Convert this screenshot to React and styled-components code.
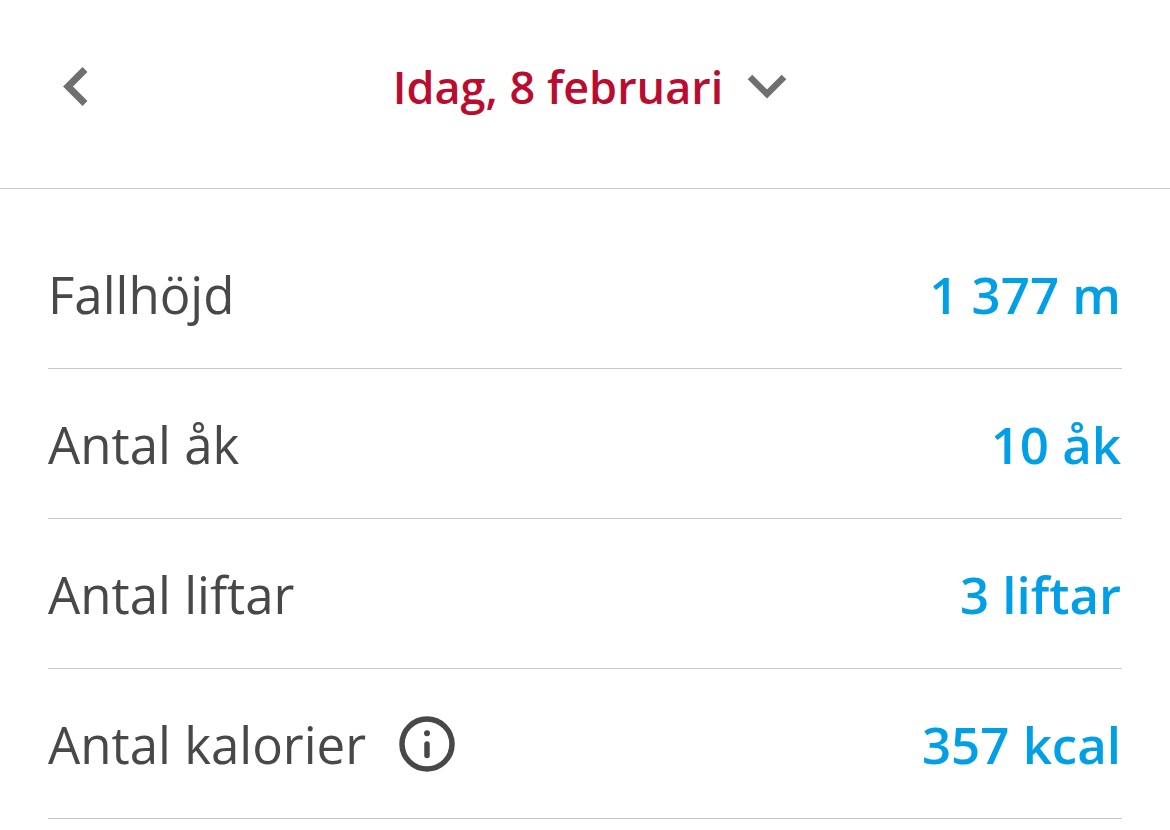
import React from "react";
import styled, { createGlobalStyle } from "styled-components";

const GlobalStyle = createGlobalStyle`
  * { box-sizing: border-box; }
  body {
    margin: 0;
    background: #fff;
    font-family: "Open Sans", "Noto Sans", sans-serif;
  }
`;

const Header = styled.header`
  display: grid;
  grid-template-columns: 64px 1fr 54px;
  align-items: center;
  height: 189px;
  padding: 0 44px 14px;
  border-bottom: 1px solid #c8c8c8;
`;

const IconButton = styled.button`
  display: flex;
  align-items: center;
  justify-content: center;
  padding: 0;
  border: 0;
  background: none;
  color: ${(p) => p.$color || "#6f6f6f"};
  cursor: pointer;
`;

const DateButton = styled(IconButton)`
  gap: 24px;
  justify-self: center;
  font: 600 45px/60px "Open Sans", "Noto Sans", sans-serif;
`;

const Stats = styled.dl`
  margin: 0;
  padding: 30px 48px 0;
`;

const Row = styled.div`
  display: flex;
  align-items: center;
  justify-content: space-between;
  height: 150px;
  border-bottom: 1px solid #c8c8c8;
  font-size: 51px;
  line-height: 68px;
`;

const Label = styled.dt`
  display: flex;
  align-items: center;
  gap: 32px;
  color: #484848;
`;

const Value = styled.dd`
  margin: 0;
  padding-right: 1px;
  color: #009fe6;
  font-weight: 600;
`;

const stats = [
  { label: "Fallhöjd", value: "1 377 m" },
  { label: "Antal åk", value: "10 åk" },
  { label: "Antal liftar", value: "3 liftar" },
  { label: "Antal kalorier", value: "357 kcal", info: true },
];

const BackIcon = () => (
  <svg width="26" height="40" viewBox="0 0 26 40" fill="none" stroke="currentColor" strokeWidth="7" aria-hidden="true">
    <path d="M22 2.5 5 19.5l17 17" />
  </svg>
);

const DownIcon = () => (
  <svg width="40" height="26" viewBox="0 0 40 26" fill="none" stroke="#6f6f6f" strokeWidth="6.5" aria-hidden="true">
    <path d="M3 3l17 17L37 3" />
  </svg>
);

const InfoIcon = () => (
  <svg width="58" height="58" viewBox="0 0 58 58" aria-hidden="true">
    <circle cx="29" cy="29" r="25" fill="none" stroke="currentColor" strokeWidth="5.5" />
    <circle cx="29" cy="18.3" r="3" fill="currentColor" />
    <path d="M29 29v11.5" stroke="currentColor" strokeWidth="5.5" strokeLinecap="round" />
  </svg>
);

export default function App() {
  return (
    <main>
      <GlobalStyle />
      <Header>
        <IconButton aria-label="Föregående dag"><BackIcon /></IconButton>
        <DateButton $color="#ba0c2f">Idag, 8 februari<DownIcon /></DateButton>
      </Header>
      <Stats>
        {stats.map((s) => (
          <Row key={s.label}>
            <Label>
              {s.label}
              {s.info && (
                <IconButton $color="#484848" aria-label="Information om kalorier"><InfoIcon /></IconButton>
              )}
            </Label>
            <Value>{s.value}</Value>
          </Row>
        ))}
      </Stats>
    </main>
  );
}
